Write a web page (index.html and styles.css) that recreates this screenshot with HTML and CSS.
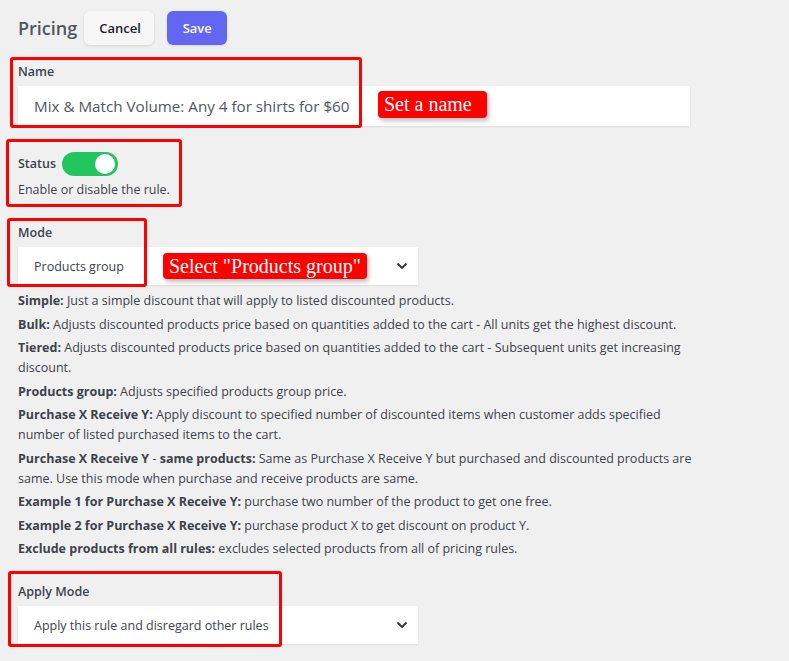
FILE: index.html
```html
<!DOCTYPE html>
<html lang="en">
<head>
    <meta charset="UTF-8">
    <title>Pricing</title>
    <link rel="stylesheet" href="styles.css">
</head>
<body>
<div class="page">
    <div class="head">
        <h1 class="title">Pricing</h1>
        <button class="btn btn-cancel">Cancel</button>
        <button class="btn btn-save">Save</button>
    </div>

    <div class="field field-name">
        <label class="label">Name</label>
        <div class="input">Mix &amp; Match Volume: Any 4 for shirts for $60</div>
    </div>

    <div class="field field-status">
        <div class="status-row">
            <label class="label">Status</label>
            <span class="toggle"><span class="knob"></span></span>
        </div>
        <p class="hint">Enable or disable the rule.</p>
    </div>

    <div class="field field-mode">
        <label class="label">Mode</label>
        <div class="select">
            <span>Products group</span>
            <svg class="chev" width="12" height="8" viewBox="0 0 12 8"><path d="M1.5 1.5 6 6l4.5-4.5" fill="none" stroke="#2c3338" stroke-width="1.8"/></svg>
        </div>
        <div class="modes">
            <p><b>Simple:</b> Just a simple discount that will apply to listed discounted products.</p>
            <p><b>Bulk:</b> Adjusts discounted products price based on quantities added to the cart - All units get the highest discount.</p>
            <p><b>Tiered:</b> Adjusts discounted products price based on quantities added to the cart - Subsequent units get increasing discount.</p>
            <p><b>Products group:</b> Adjusts specified products group price.</p>
            <p><b>Purchase X Receive Y:</b> Apply discount to specified number of discounted items when customer adds specified number of listed purchased items to the cart.</p>
            <p><b>Purchase X Receive Y</b> - <b>same products:</b> Same as Purchase X Receive Y but purchased and discounted products are same. Use this mode when purchase and receive products are same.</p>
            <p><b>Example 1 for Purchase X Receive Y:</b> purchase two number of the product to get one free.</p>
            <p><b>Example 2 for Purchase X Receive Y:</b> purchase product X to get discount on product Y.</p>
            <p><b>Exclude products from all rules:</b> excludes selected products from all of pricing rules.</p>
        </div>
    </div>

    <div class="field field-apply">
        <label class="label">Apply Mode</label>
        <div class="select">
            <span>Apply this rule and disregard other rules</span>
            <svg class="chev" width="12" height="8" viewBox="0 0 12 8"><path d="M1.5 1.5 6 6l4.5-4.5" fill="none" stroke="#2c3338" stroke-width="1.8"/></svg>
        </div>
    </div>

    <!-- annotations -->
    <div class="mark mark-name"></div>
    <div class="mark mark-status"></div>
    <div class="mark mark-mode"></div>
    <div class="mark mark-apply"></div>
    <div class="tag tag-name">Set a name</div>
    <div class="tag tag-mode">Select "Products group"</div>
</div>
</body>
</html>
```

FILE: styles.css
```css
html, body{
    margin: 0;
    background: #f0f0f0;
}
.page{
    position: relative;
    padding: 11px 18px 0;
    height: 650px;
    font-family: "Open Sans", "Liberation Sans", sans-serif;
    color: #3c434a;
}
.head{
    display: flex;
    align-items: center;
    height: 34px;
}
.title{
    margin: 0 7px 0 0;
    font-size: 18px;
    font-weight: 600;
    color: #50575e;
}
.btn{
    height: 34px;
    border: 0;
    border-radius: 6px;
    font-family: inherit;
    font-size: 13px;
    font-weight: 600;
    padding: 0 15px;
}
.btn-cancel{
    background: #f6f6f6;
    color: #1d2327;
    box-shadow: 0 1px 3px rgba(0,0,0,.12);
    width: 70px;
}
.btn-save{
    margin-left: 13px;
    background: #6366f1;
    color: #fff;
    width: 60px;
    box-shadow: 0 1px 3px rgba(0,0,0,.1);
}
.label{
    display: block;
    font-size: 12.5px;
    font-weight: 600;
    line-height: 16px;
}
.field-name{
    margin-top: 19px;
}
.input{
    margin-top: 6px;
    width: 672px;
    height: 40px;
    box-sizing: border-box;
    padding-left: 16px;
    background: #fff;
    box-shadow: 0 1px 2px rgba(0,0,0,.08);
    font-size: 15.2px;
    line-height: 40px;
    color: #50575e;
}
.field-status{
    margin-top: 26px;
}
.status-row{
    display: flex;
    align-items: center;
    gap: 6px;
}
.toggle{
    position: relative;
    display: block;
    width: 56px;
    height: 24px;
    border-radius: 12px;
    background: #22c55e;
}
.knob{
    position: absolute;
    right: 3px;
    top: 2px;
    width: 20px;
    height: 20px;
    border-radius: 50%;
    background: #fff;
}
.hint{
    margin: 5px 0 0;
    font-size: 12.5px;
    line-height: 18px;
}
.field-mode{
    margin-top: 26px;
}
.select{
    display: flex;
    align-items: center;
    justify-content: space-between;
    margin-top: 6px;
    width: 400px;
    height: 38px;
    box-sizing: border-box;
    padding: 0 10px 0 16px;
    background: #fff;
    box-shadow: 0 1px 2px rgba(0,0,0,.08);
    font-size: 12.5px;
    color: #3c434a;
}
.modes{
    margin-top: 6px;
    width: 680px;
    font-size: 12.5px;
    line-height: 20px;
}
.modes p{
    margin: 0 0 3.5px;
}
.modes b{
    font-weight: 700;
}
.field-apply{
    margin-top: 25px;
}

.mark{
    position: absolute;
    border: 3px solid #f00;
    border-radius: 3px;
    box-sizing: border-box;
}
.mark-name{ left: 10px; top: 57px; width: 352px; height: 71px; }
.mark-status{ left: 6px; top: 139px; width: 176px; height: 68px; }
.mark-mode{ left: 7px; top: 218px; width: 140px; height: 69px; }
.mark-apply{ left: 8px; top: 571px; width: 274px; height: 76px; }

.tag{
    position: absolute;
    background: #f00;
    color: #fff;
    font-family: "Liberation Serif", serif;
    font-size: 20px;
    line-height: 27px;
    padding: 0 6px;
    border-radius: 4px;
    box-shadow: 2px 3px 4px rgba(0,0,0,.25);
}
.tag-name{ left: 378px; top: 91px; width: 97px; }
.tag-mode{ left: 163px; top: 253px; height: 26px; line-height: 26px; }
```
